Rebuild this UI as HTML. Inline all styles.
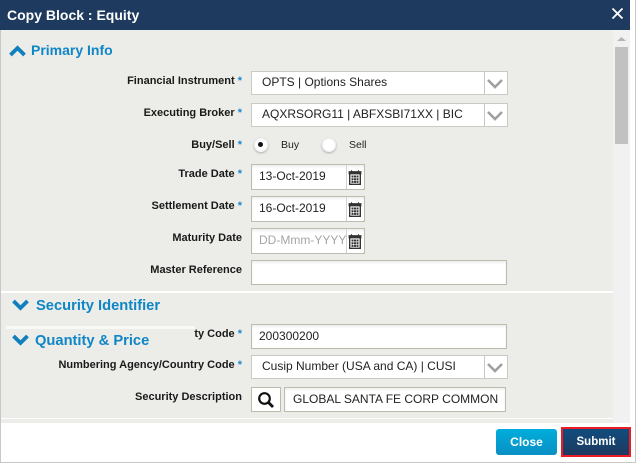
<!DOCTYPE html>
<html>
<head>
<meta charset="utf-8">
<style>
html,body{margin:0;padding:0;background:#fff;}
body{width:638px;height:467px;position:relative;overflow:hidden;font-family:"Liberation Sans",sans-serif;}
.a{position:absolute;box-sizing:border-box;}
.l{position:absolute;right:396px;font-size:11px;font-weight:bold;color:#1a1a1a;line-height:14px;white-space:nowrap;}
.l i{font-style:normal;color:#1b87c9;font-weight:bold;}
.in{position:absolute;box-sizing:border-box;background:#fff;border:1px solid #bdbbae;box-shadow:inset 0 2px 2px #f0f0f0;font-size:12px;color:#222;white-space:nowrap;overflow:hidden;}
.sel{position:absolute;box-sizing:border-box;left:251px;width:257px;height:24px;background:#fff;border:1px solid #c9c9c5;font-size:12px;color:#222;line-height:20px;padding-left:10px;white-space:nowrap;}
.sel svg{position:absolute;right:0;top:0;}
.sel b{position:absolute;left:232px;top:0;bottom:0;width:1px;background:#c9c9c5;}
.date{left:251px;width:114px;height:26px;line-height:23px;padding-left:7px;}
.date b{position:absolute;left:94px;top:0;bottom:0;width:1px;background:#d4d4d0;}
.date svg{position:absolute;left:96px;top:4px;}
.h{position:absolute;color:#0f86c6;font-weight:bold;white-space:nowrap;line-height:18px;}
.r{position:absolute;width:14px;height:14px;border-radius:50%;background:#fff;box-shadow:0 1px 2px #aaa,inset 0 0 2px #ddd;}
.t{position:absolute;font-size:10.5px;color:#222;line-height:14px;}
</style>
</head>
<body>
<div class="a" style="left:0;top:0;width:636px;height:463px;border:1px solid #c8c8c8;border-top:0;background:#fff;"></div>
<div class="a" style="left:0;top:0;width:630px;height:30px;background:#1f3a5f;"></div>
<div class="a" style="left:7px;top:7px;color:#fff;font-size:14px;font-weight:bold;line-height:17px;">Copy Block : Equity</div>
<svg class="a" style="left:611px;top:7px" width="14" height="14" viewBox="0 0 14 14"><path d="M1.500 1.500L11.500 11.500M11.500 1.500L1.500 11.500" stroke="#fff" stroke-width="1.800"/></svg>

<div class="a" style="left:1px;top:30px;width:612px;height:393px;background:#ecece8;"></div>
<div class="a" style="left:613px;top:30px;width:17px;height:393px;background:#f1f1f1;"></div>
<div class="a" style="left:615px;top:47px;width:13px;height:97px;background:#c1c1c1;"></div>
<svg class="a" style="left:617px;top:36px" width="9" height="6" viewBox="0 0 9 6"><path d="M0 5L4.500 1L9 5Z" fill="#b5b5b5"/></svg>

<div class="a" style="left:1px;top:291px;width:612px;height:2px;background:#fff;"></div>
<div class="a" style="left:6px;top:326px;width:189px;height:3px;background:#f8f8f6;"></div>
<div class="a" style="left:1px;top:418px;width:612px;height:1px;background:#fff;"></div>

<svg class="a" style="left:9px;top:45px" width="17" height="12" viewBox="0 0 17 12"><path d="M1.500 10L8.500 3L15.500 10" fill="none" stroke="#0f7fbd" stroke-width="3.800"/></svg>
<div class="h" style="left:31px;top:41px;font-size:14px;">Primary Info</div>
<svg class="a" style="left:12px;top:299px" width="17" height="12" viewBox="0 0 17 12"><path d="M1.500 2L8.500 9L15.500 2" fill="none" stroke="#0f7fbd" stroke-width="3.800"/></svg>
<div class="h" style="left:36px;top:297px;font-size:14.700px;">Security Identifier</div>
<svg class="a" style="left:12px;top:334px" width="17" height="12" viewBox="0 0 17 12"><path d="M1.500 2L8.500 9L15.500 2" fill="none" stroke="#0f7fbd" stroke-width="3.800"/></svg>
<div class="h" style="left:35px;top:332px;font-size:14.700px;">Quantity &amp; Price</div>

<div class="l" style="top:74px;">Financial Instrument <i>*</i></div>
<div class="sel" style="top:71px;">OPTS | Options Shares<b></b><svg width="24" height="22" viewBox="0 0 24 22"><path d="M5 8L12 15L19 8" fill="none" stroke="#a0a0a0" stroke-width="2.600"/></svg></div>

<div class="l" style="top:106px;">Executing Broker <i>*</i></div>
<div class="sel" style="top:103px;">AQXRSORG11 | ABFXSBI71XX | BIC<b></b><svg width="24" height="22" viewBox="0 0 24 22"><path d="M5 8L12 15L19 8" fill="none" stroke="#a0a0a0" stroke-width="2.600"/></svg></div>

<div class="l" style="top:138px;">Buy/Sell <i>*</i></div>
<div class="r" style="left:254px;top:138px;"></div>
<div class="a" style="left:258px;top:142px;width:5px;height:5px;border-radius:50%;background:#111;"></div>
<div class="t" style="left:281px;top:138px;">Buy</div>
<div class="r" style="left:322px;top:138px;"></div>
<div class="t" style="left:349px;top:138px;">Sell</div>

<div class="l" style="top:167px;">Trade Date <i>*</i></div>
<div class="in date" style="top:164px;">13-Oct-2019<b></b><svg width="14" height="17" viewBox="0 0 14 17"><path d="M1.700 3.700H12.300V15.300H1.700Z" fill="#fff" stroke="#333" stroke-width="1.400"/><path d="M1 2.500H13V5H1ZM3.500 1V3M10.500 1V3" fill="#333" stroke="#333" stroke-width=".8"/><path d="M3.500 6.500H5.500V8.500H3.500ZM6 6.500H8V8.500H6ZM8.500 6.500H10.500V8.500H8.500ZM3.500 9.200H5.500V11.200H3.500ZM6 9.200H8V11.200H6ZM8.500 9.200H10.500V11.200H8.500ZM3.500 11.900H5.500V13.900H3.500ZM6 11.900H8V13.900H6ZM8.500 11.900H10.500V13.900H8.500Z" fill="#333"/></svg></div>

<div class="l" style="top:199px;">Settlement Date <i>*</i></div>
<div class="in date" style="top:196px;">16-Oct-2019<b></b><svg width="14" height="17" viewBox="0 0 14 17"><path d="M1.700 3.700H12.300V15.300H1.700Z" fill="#fff" stroke="#333" stroke-width="1.400"/><path d="M1 2.500H13V5H1ZM3.500 1V3M10.500 1V3" fill="#333" stroke="#333" stroke-width=".8"/><path d="M3.500 6.500H5.500V8.500H3.500ZM6 6.500H8V8.500H6ZM8.500 6.500H10.500V8.500H8.500ZM3.500 9.200H5.500V11.200H3.500ZM6 9.200H8V11.200H6ZM8.500 9.200H10.500V11.200H8.500ZM3.500 11.900H5.500V13.900H3.500ZM6 11.900H8V13.900H6ZM8.500 11.900H10.500V13.900H8.500Z" fill="#333"/></svg></div>

<div class="l" style="top:231px;">Maturity Date</div>
<div class="in date" style="top:228px;color:#a5a5a5;">DD-Mmm-YYYY<b></b><svg width="14" height="17" viewBox="0 0 14 17"><path d="M1.700 3.700H12.300V15.300H1.700Z" fill="#fff" stroke="#333" stroke-width="1.400"/><path d="M1 2.500H13V5H1ZM3.500 1V3M10.500 1V3" fill="#333" stroke="#333" stroke-width=".8"/><path d="M3.500 6.500H5.500V8.500H3.500ZM6 6.500H8V8.500H6ZM8.500 6.500H10.500V8.500H8.500ZM3.500 9.200H5.500V11.200H3.500ZM6 9.200H8V11.200H6ZM8.500 9.200H10.500V11.200H8.500ZM3.500 11.900H5.500V13.900H3.500ZM6 11.900H8V13.900H6ZM8.500 11.900H10.500V13.900H8.500Z" fill="#333"/></svg></div>

<div class="l" style="top:263px;">Master Reference</div>
<div class="in" style="left:251px;top:260px;width:256px;height:25px;"></div>

<div class="l" style="top:327px;">ty Code <i>*</i></div>
<div class="in" style="left:251px;top:324px;width:256px;height:25px;line-height:22px;padding-left:7px;">200300200</div>

<div class="l" style="top:358px;">Numbering Agency/Country Code <i>*</i></div>
<div class="sel" style="top:355px;">Cusip Number (USA and CA) | CUSI<b></b><svg width="24" height="22" viewBox="0 0 24 22"><path d="M5 8L12 15L19 8" fill="none" stroke="#a0a0a0" stroke-width="2.600"/></svg></div>

<div class="l" style="top:390px;">Security Description</div>
<div class="in" style="left:251px;top:387px;width:30px;height:25px;box-shadow:none;"></div>
<svg class="a" style="left:257px;top:391px" width="18" height="18" viewBox="0 0 18 18"><circle cx="7.500" cy="7.500" r="5.300" fill="none" stroke="#111" stroke-width="2.200"/><path d="M11.500 11.500L16 16" stroke="#111" stroke-width="2.800"/></svg>
<div class="in" style="left:284px;top:387px;width:222px;height:25px;line-height:22px;padding-left:8px;">GLOBAL SANTA FE CORP COMMON</div>

<div class="a" style="left:496px;top:429px;width:61px;height:26px;border-radius:3px;background:linear-gradient(#00aedb,#0a8fc4);color:#fff;font-size:12px;font-weight:bold;text-align:center;line-height:26px;">Close</div>
<div class="a" style="left:561px;top:427px;width:70px;height:30px;border:2px solid #ed1c24;background:#1f3a5f;"></div>
<div class="a" style="left:563px;top:429px;width:66px;height:26px;background:linear-gradient(#0f4d7f,#1f3a5f);color:#fff;font-size:11.500px;font-weight:bold;text-align:center;line-height:26px;">Submit</div>
</body>
</html>
